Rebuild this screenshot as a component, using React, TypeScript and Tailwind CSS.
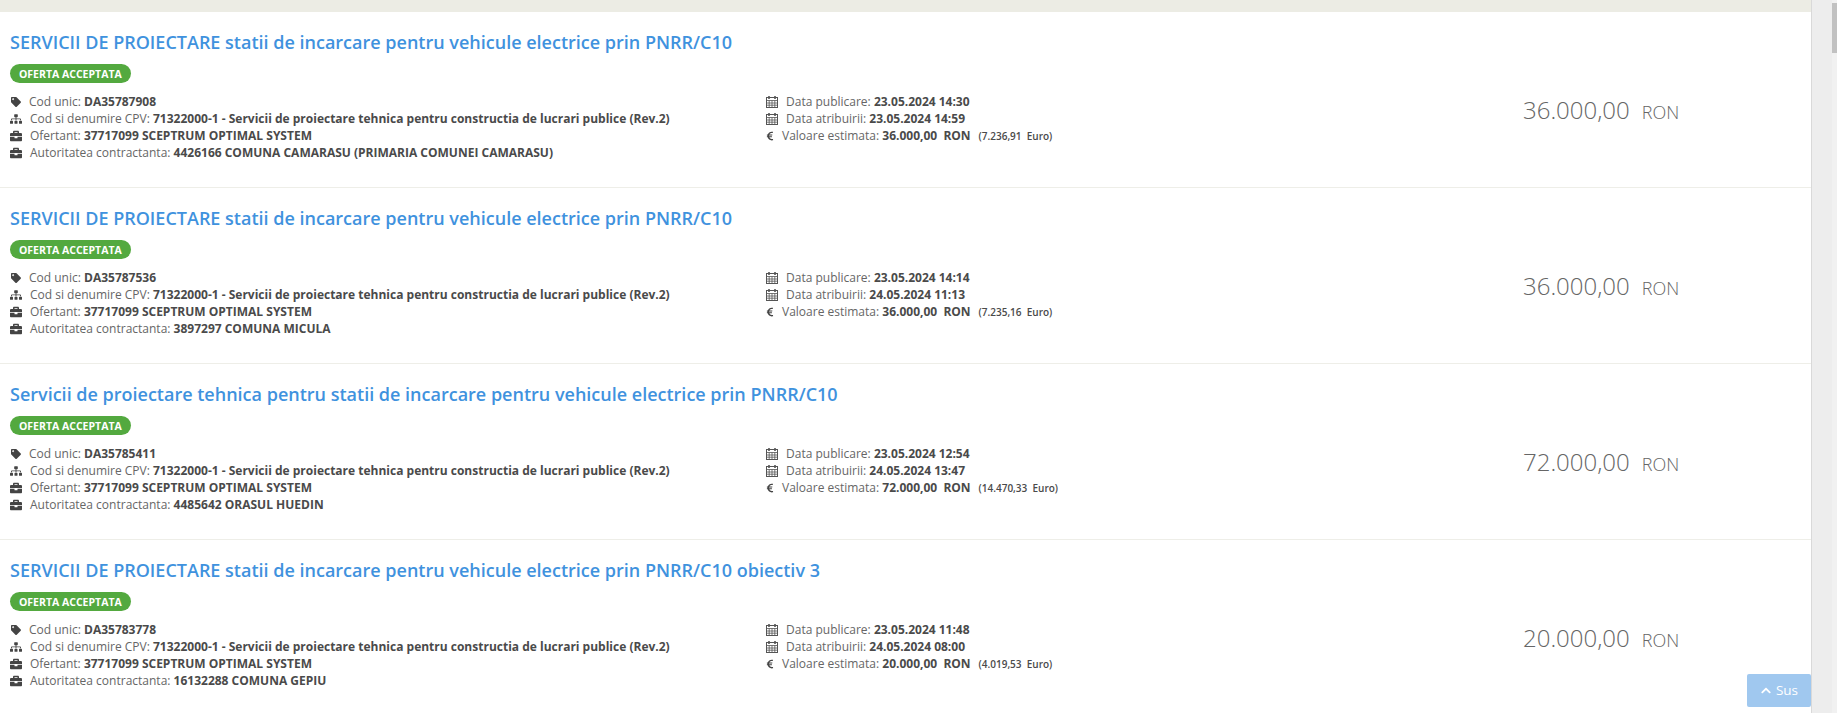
import { FaTag, FaSitemap, FaBriefcase, FaEuroSign, FaChevronUp } from 'react-icons/fa'

const offers = [
  {
    title: 'SERVICII DE PROIECTARE statii de incarcare pentru vehicule electrice prin PNRR/C10',
    code: 'DA35787908',
    authority: '4426166 COMUNA CAMARASU (PRIMARIA COMUNEI CAMARASU)',
    published: '23.05.2024 14:30',
    awarded: '23.05.2024 14:59',
    value: '36.000,00',
    euro: '7.236,91',
  },
  {
    title: 'SERVICII DE PROIECTARE statii de incarcare pentru vehicule electrice prin PNRR/C10',
    code: 'DA35787536',
    authority: '3897297 COMUNA MICULA',
    published: '23.05.2024 14:14',
    awarded: '24.05.2024 11:13',
    value: '36.000,00',
    euro: '7.235,16',
  },
  {
    title: 'Servicii de proiectare tehnica pentru statii de incarcare pentru vehicule electrice prin PNRR/C10',
    code: 'DA35785411',
    authority: '4485642 ORASUL HUEDIN',
    published: '23.05.2024 12:54',
    awarded: '24.05.2024 13:47',
    value: '72.000,00',
    euro: '14.470,33',
  },
  {
    title: 'SERVICII DE PROIECTARE statii de incarcare pentru vehicule electrice prin PNRR/C10 obiectiv 3',
    code: 'DA35783778',
    authority: '16132288 COMUNA GEPIU',
    published: '23.05.2024 11:48',
    awarded: '24.05.2024 08:00',
    value: '20.000,00',
    euro: '4.019,53',
  },
]

function CalendarIcon() {
  return (
    <svg viewBox="0 0 12 12" className="w-[12px] h-[12px] mr-[8px] text-[#555]" fill="none" stroke="currentColor">
      <rect x="0.5" y="1.5" width="11" height="10" />
      <path d="M0.5 4.5h11M0.5 7h11M0.5 9.2h11M3.2 4.5v7M6 4.5v7M8.8 4.5v7" strokeWidth="0.8" />
      <path d="M3 0v3M9 0v3" strokeWidth="1.6" />
    </svg>
  )
}

function OfferRow({ offer }: { offer: (typeof offers)[number] }) {
  const line = 'flex items-center h-[17px] whitespace-nowrap'
  return (
    <div className="h-[176px] shrink-0 border-b border-[#eeeee8] pl-[10px] pt-[18px]">
      <h3 className="text-[18px] leading-[24px] font-semibold text-[#3f92de] whitespace-nowrap">{offer.title}</h3>
      <div className="mt-[10px] flex">
        <span className="h-[19px] px-[9px] rounded-full bg-[#53a93f] text-white text-[10.5px] leading-[20px] font-bold">
          OFERTA ACCEPTATA
        </span>
      </div>
      <div className="mt-[10px] flex text-[12px] text-[#666]">
        <div className="w-[756px]">
          <div className={line}>
            <FaTag className="w-[10px] h-[10px] text-[#444] mr-[8px] ml-px" />
            <span>Cod unic: <b className="text-[#4a4a4a]">{offer.code}</b></span>
          </div>
          <div className={line}>
            <FaSitemap className="w-[12px] h-[12px] text-[#444] mr-[8px]" />
            <span>Cod si denumire CPV: <b className="text-[#4a4a4a]">71322000-1 - Servicii de proiectare tehnica pentru constructia de lucrari publice (Rev.2)</b></span>
          </div>
          <div className={line}>
            <FaBriefcase className="w-[12px] h-[12px] text-[#444] mr-[8px]" />
            <span>Ofertant: <b className="text-[#4a4a4a]">37717099 SCEPTRUM OPTIMAL SYSTEM</b></span>
          </div>
          <div className={line}>
            <FaBriefcase className="w-[12px] h-[12px] text-[#444] mr-[8px]" />
            <span>Autoritatea contractanta: <b className="text-[#4a4a4a]">{offer.authority}</b></span>
          </div>
        </div>
        <div className="w-[757px]">
          <div className={line}>
            <CalendarIcon />
            <span>Data publicare: <b className="text-[#4a4a4a]">{offer.published}</b></span>
          </div>
          <div className={line}>
            <CalendarIcon />
            <span>Data atribuirii: <b className="text-[#4a4a4a]">{offer.awarded}</b></span>
          </div>
          <div className={line}>
            <FaEuroSign className="w-[8px] h-[10px] text-[#444] mr-[8px]" />
            <span>
              Valoare estimata: <b className="text-[#4a4a4a]">{offer.value}&nbsp; RON</b>
              <span className="ml-[8px] text-[10px] font-semibold text-[#4a4a4a]">({offer.euro}&nbsp; Euro)</span>
            </span>
          </div>
        </div>
        <div className="mt-[1px] flex items-baseline whitespace-nowrap text-[#666] font-light">
          <span className="text-[24px] leading-[32px]">{offer.value}</span>
          <span className="ml-[12px] text-[18px]">RON</span>
        </div>
      </div>
    </div>
  )
}

export default function App() {
  return (
    <div
      className="relative flex h-[713px] w-full overflow-hidden bg-white"
      style={{ fontFamily: '"Open Sans", sans-serif' }}
    >
      <main className="flex w-[1811px] shrink-0 flex-col">
        <div className="h-[12px] shrink-0 bg-[#ecece4]" />
        {offers.map((offer) => (
          <OfferRow key={offer.code} offer={offer} />
        ))}
      </main>
      <aside className="flex flex-1 justify-end border-l border-[#d9d9d9] bg-[#ededed]">
        <div className="h-full w-[5px] bg-[#f1f1f1] pt-[3px]">
          <div className="h-[50px] bg-[#c1c1c1]" />
        </div>
      </aside>
      <button className="absolute left-[1747px] top-[674px] flex h-[33px] w-[64px] items-center justify-center gap-[4px] rounded-[2px] bg-[#a0c8ef] text-[13.5px] text-white">
        <FaChevronUp className="h-[11px] w-[12px]" />
        Sus
      </button>
    </div>
  )
}
